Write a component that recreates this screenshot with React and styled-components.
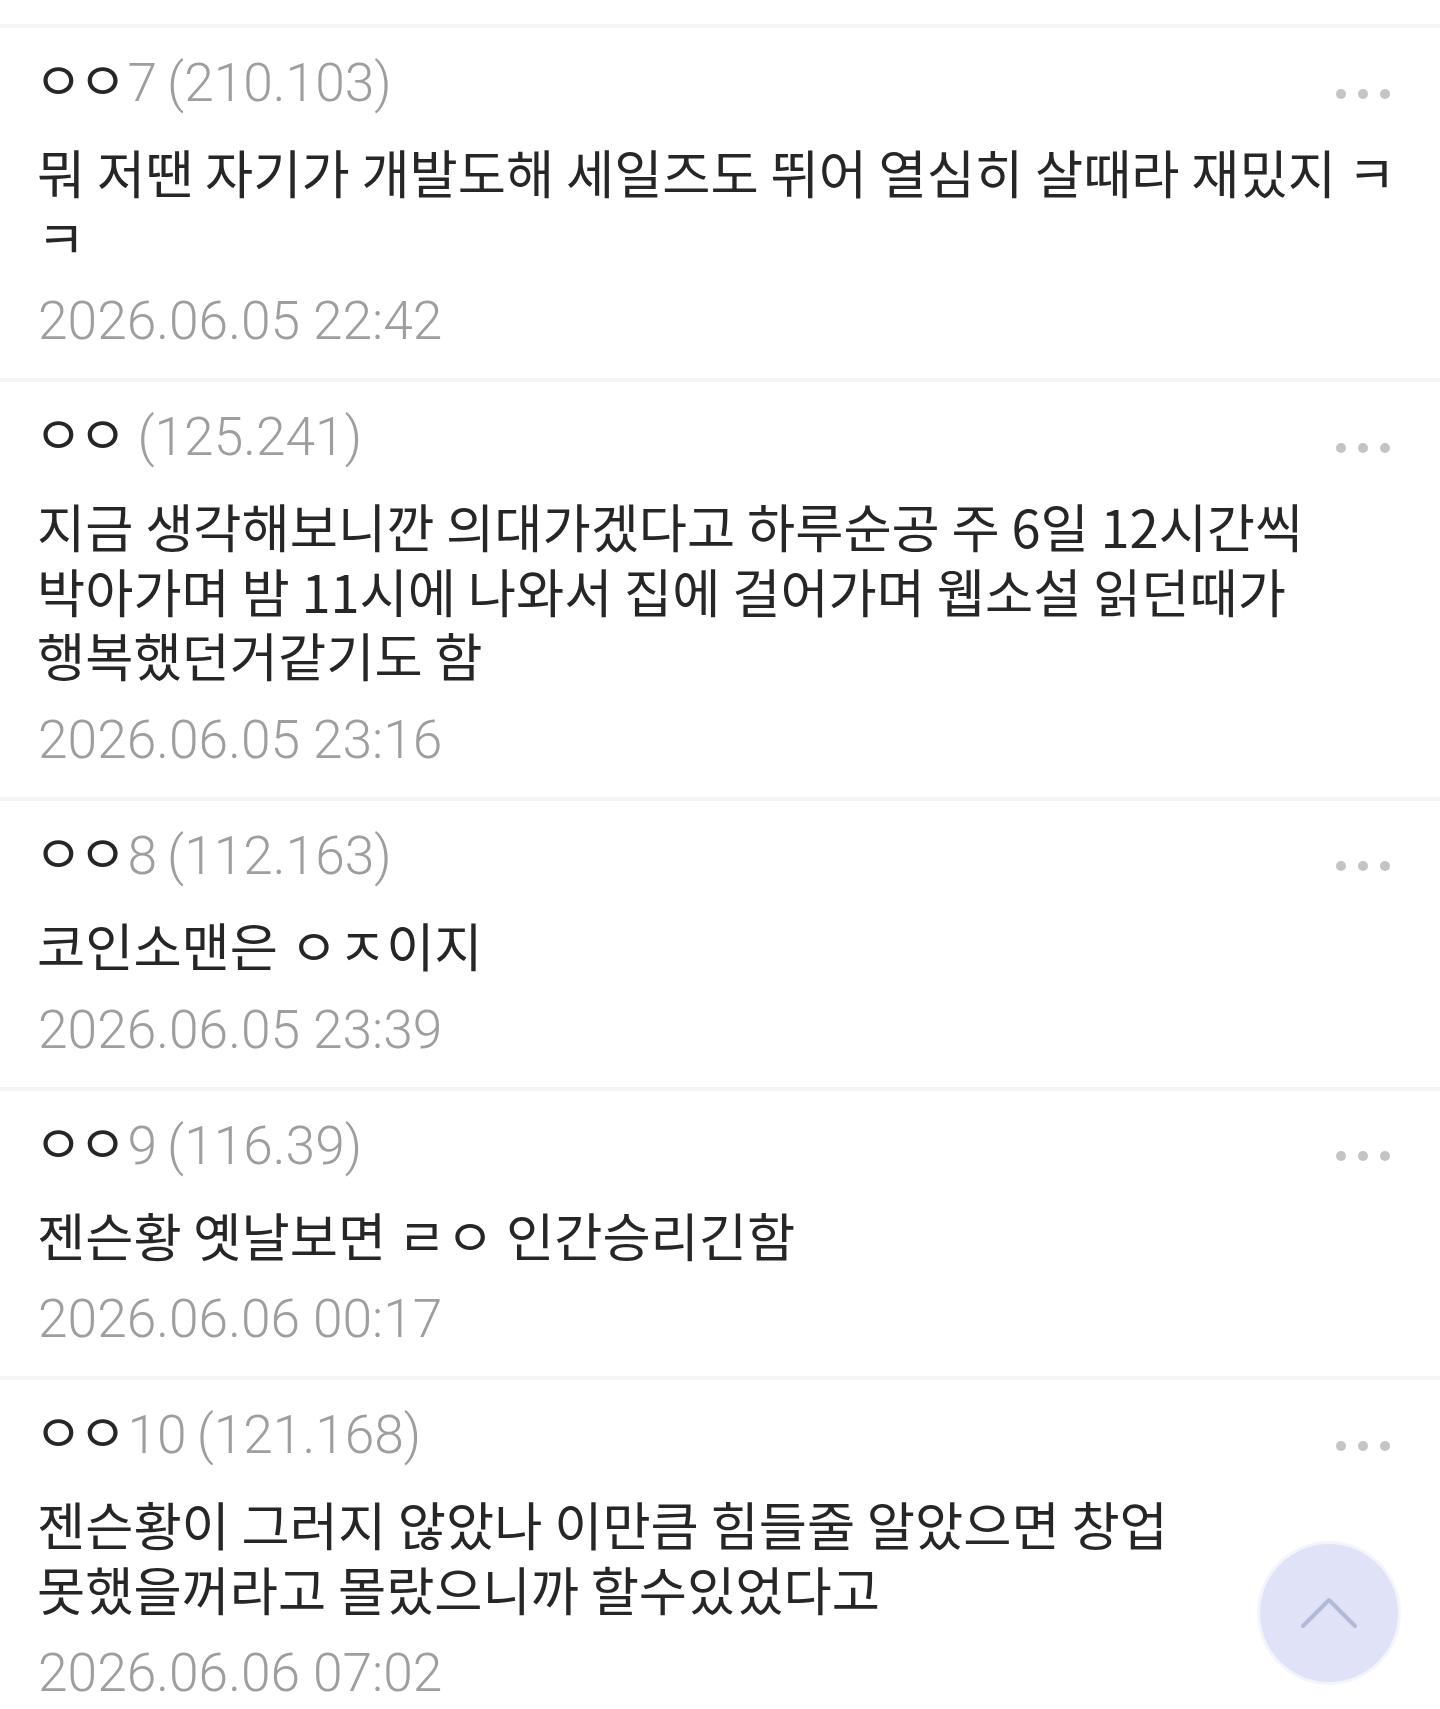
import React from 'react'
import styled, { createGlobalStyle } from 'styled-components'

const comments = [
  {
    nick: 'ㅇㅇ',
    suffix: '7',
    ip: '(210.103)',
    body: '뭐 저땐 자기가 개발도해 세일즈도 뛰어 열심히 살때라 재밌지 ㅋ\nㅋ',
    date: '2026.06.05 22:42',
  },
  {
    nick: 'ㅇㅇ',
    suffix: '',
    ip: '(125.241)',
    body: '지금 생각해보니깐 의대가겠다고 하루순공 주 6일 12시간씩\n박아가며 밤 11시에 나와서 집에 걸어가며 웹소설 읽던때가\n행복했던거같기도 함',
    date: '2026.06.05 23:16',
  },
  {
    nick: 'ㅇㅇ',
    suffix: '8',
    ip: '(112.163)',
    body: '코인소맨은 ㅇㅈ이지',
    date: '2026.06.05 23:39',
  },
  {
    nick: 'ㅇㅇ',
    suffix: '9',
    ip: '(116.39)',
    body: '젠슨황 옛날보면 ㄹㅇ 인간승리긴함',
    date: '2026.06.06 00:17',
  },
  {
    nick: 'ㅇㅇ',
    suffix: '10',
    ip: '(121.168)',
    body: '젠슨황이 그러지 않았나 이만큼 힘들줄 알았으면 창업\n못했을꺼라고 몰랐으니까 할수있었다고',
    date: '2026.06.06 07:02',
  },
]

const GlobalStyle = createGlobalStyle`
  html, body {
    margin: 0;
    padding: 0;
    background: #fff;
  }
  body {
    font-family: Roboto, "Noto Sans CJK KR", sans-serif;
  }
`

const Page = styled.main`
  position: relative;
  height: 1709px;
  padding-top: 24px;
  box-sizing: border-box;
  overflow: hidden;
`

const Row = styled.article`
  border-top: 4px solid #f5f5f5;
  padding: 15px 16px 22px 37px;
`

const Header = styled.header`
  display: flex;
  justify-content: space-between;
  align-items: center;
  height: 70px;
`

const Author = styled.div`
  font-size: 53.3px;
  font-weight: 300;
  color: #9e9e9e;
  white-space: nowrap;
`

const Nick = styled.span`
  margin: 0 5px 0 -3px;
  color: #262626;
  font-family: "Noto Sans CJK KR", sans-serif;
  font-size: 53px;
  font-weight: 400;
  letter-spacing: -4.5px;
`

const Ip = styled.span`
  margin-left: 10px;
`

const Dots = styled.div`
  display: flex;
  gap: 12px;
  margin: 31px 34px 0 0;
  span {
    width: 10px;
    height: 10px;
    border-radius: 50%;
    background: #c4c4c4;
  }
`

const Body = styled.p`
  margin: 26px 0 0;
  font-family: "Noto Sans CJK KR", sans-serif;
  font-size: 52.4px;
  font-weight: 400;
  line-height: 64.6px;
  color: #262626;
  white-space: pre-line;
`

const Date = styled.time`
  display: block;
  margin: 18px 0 0 1px;
  font-size: 53.3px;
  font-weight: 300;
  line-height: 70px;
  color: #9e9e9e;
`

const TopButton = styled.button`
  position: absolute;
  right: 42px;
  bottom: 27px;
  width: 138px;
  height: 138px;
  padding: 0;
  display: flex;
  align-items: center;
  justify-content: center;
  border: 0;
  border-radius: 50%;
  background: #e0e3f8;
  box-shadow: 0 0 0 3px #f4f5fc;
`

const App = () => (
  <Page>
    <GlobalStyle />
    {comments.map((c) => (
      <Row key={c.date}>
        <Header>
          <Author>
            <Nick>{c.nick}</Nick>
            {c.suffix}
            <Ip>{c.ip}</Ip>
          </Author>
          <Dots>
            <span />
            <span />
            <span />
          </Dots>
        </Header>
        <Body>{c.body}</Body>
        <Date>{c.date}</Date>
      </Row>
    ))}
    <TopButton aria-label="top">
      <svg width="58" height="34" viewBox="0 0 58 34" fill="none">
        <path d="M3 30 L29 4 L55 30" stroke="#b3b9da" strokeWidth="4" strokeLinecap="round" strokeLinejoin="round" />
      </svg>
    </TopButton>
  </Page>
)

export default App
